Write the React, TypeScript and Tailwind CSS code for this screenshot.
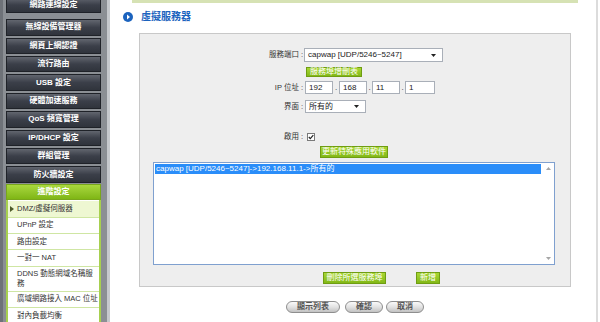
import React from "react";

const navItems = [
  "無線設備管理器",
  "網頁上網認證",
  "流行路由",
  "USB 設定",
  "硬體加速服務",
  "QoS 頻寬管理",
  "IP/DHCP 設定",
  "群組管理",
  "防火牆設定",
];

function NavButton({ label, className = "" }: { label: string; className?: string }) {
  return (
    <div
      className={
        "flex h-[16.4px] w-[95px] shrink-0 items-center justify-center border border-[#1f2228] bg-gradient-to-b from-[#62666f] via-[#3b3f49] to-[#30343c] text-[8px] font-bold leading-none text-white " +
        className
      }
    >
      {label}
    </div>
  );
}

function SubItem({ children, active = false, tall = false }: { children: React.ReactNode; active?: boolean; tall?: boolean }) {
  return (
    <div
      className={`relative flex shrink-0 items-center border-b border-[#cfe6a3] pl-[9px] text-[7.5px] leading-[10px] text-[#333] ${
        tall ? "h-[25px]" : "h-[16.3px]"
      } ${active ? "bg-[#eef7d2]" : "bg-white"}`}
    >
      {active && (
        <svg className="absolute left-[2px] top-[5px]" width="4" height="6" viewBox="0 0 4 6">
          <path d="M0 0 L4 3 L0 6 Z" fill="#4d5a2a" />
        </svg>
      )}
      <div>{children}</div>
    </div>
  );
}

function Sidebar() {
  return (
    <div className="flex h-full w-[110px] shrink-0 flex-col border-l-[3px] border-r-[3px] border-l-[#6e7278] border-r-[#c6c9cd] bg-[#8b8f94] pl-[3px]">
      <NavButton label="網路連線設定" className="mt-[-3px] h-[16px]" />
      <div className="mt-[6.3px] flex flex-col gap-[2px]">
        {navItems.map((n) => (
          <NavButton key={n} label={n} />
        ))}
      </div>
      <div className="mt-[1.6px] flex w-[95px] flex-col">
        <div className="flex h-[16px] items-center justify-center border border-[#79a61c] bg-gradient-to-b from-[#a9d83c] to-[#7fb614] text-[8px] font-bold leading-none text-white">
          進階設定
        </div>
        <div className="flex flex-col border-x-2 border-[#a7d04f] bg-white pt-[1px]">
          <SubItem active>DMZ/虛擬伺服器</SubItem>
          <SubItem>UPnP 設定</SubItem>
          <SubItem>路由設定</SubItem>
          <SubItem>一對一 NAT</SubItem>
          <SubItem tall>
            <div className="whitespace-nowrap">DDNS 動態網域名稱服</div>
            <div>務</div>
          </SubItem>
          <SubItem>
            <span className="whitespace-nowrap">廣域網路接入 MAC 位址</span>
          </SubItem>
          <SubItem>對內負載均衡</SubItem>
        </div>
      </div>
    </div>
  );
}

function Arrow({ up = false }: { up?: boolean }) {
  return (
    <svg width="5" height="3" viewBox="0 0 5 3">
      <path d={up ? "M0 3 L2.5 0 L5 3 Z" : "M0 0 L5 0 L2.5 3 Z"} fill="#222" />
    </svg>
  );
}

function GreenButton({ label, className = "" }: { label: string; className?: string }) {
  return (
    <div
      className={
        "flex items-center justify-center border border-[#6f9d12] bg-gradient-to-b from-[#a8d733] to-[#82b816] text-[8px] leading-none text-white " +
        className
      }
    >
      {label}
    </div>
  );
}

function Pill({ label, className = "" }: { label: string; className?: string }) {
  return (
    <div
      className={
        "flex h-[12px] items-center justify-center rounded-full border border-[#8e8e8e] bg-gradient-to-b from-[#fafafa] via-[#e2e2e2] to-[#c2c2c2] text-[8px] font-bold leading-none text-[#555] " +
        className
      }
    >
      {label}
    </div>
  );
}

function Box({ children, className = "" }: { children?: React.ReactNode; className?: string }) {
  return (
    <div className={"flex h-[13px] items-center border border-[#a9afb8] bg-white pl-[3px] text-[8px] leading-none text-[#222] " + className}>
      {children}
    </div>
  );
}

function Label({ text }: { text: string }) {
  return (
    <div className="w-[163px] shrink-0 text-right text-[7.5px] leading-none text-[#333]">
      {text}
      <span className="ml-[2px]">:</span>
    </div>
  );
}

export default function App() {
  return (
    <div className="flex h-[322px] w-[600px] overflow-hidden bg-white font-['Liberation_Sans','Noto_Sans_CJK_TC',sans-serif]">
      <Sidebar />
      <div className="flex w-[486px] shrink-0 flex-col">
        <div className="ml-[22px] h-[3px] w-[446px] bg-[#d6e2b4]" />
        <div className="flex h-[28px] items-center">
          <svg className="ml-[13px]" width="10" height="10" viewBox="0 0 10 10">
            <circle cx="5" cy="5" r="5" fill="#1b63be" />
            <path d="M4 2.6 L7 5 L4 7.4 Z" fill="#fff" />
          </svg>
          <span className="ml-[8px] text-[10px] font-bold leading-none text-[#1b63be]">虛擬服務器</span>
        </div>
        <div className="ml-[29px] mt-[2px] flex w-[432px] flex-col border border-[#c8c8c8] bg-[#eeeeee] pb-[2px]">
          <div className="mt-[14px] flex h-[14px] items-center">
            <Label text="服務端口" />
            <Box className="ml-[1px] h-[14px] w-[139px] justify-between pr-[6px]">
              <span>capwap [UDP/5246~5247]</span>
              <Arrow />
            </Box>
          </div>
          <div className="mt-[5px] flex h-[10px]">
            <GreenButton label="服務埠增刪表" className="ml-[166px] h-[10px] w-[56px]" />
          </div>
          <div className="mt-[4px] flex h-[13px] items-center text-[8px] text-[#333]">
            <Label text="IP 位址" />
            <Box className="ml-[2px] w-[28px]">192</Box>
            <span className="w-[6px] text-center">.</span>
            <Box className="w-[28px]">168</Box>
            <span className="w-[5px] text-center">.</span>
            <Box className="w-[28px]">11</Box>
            <span className="w-[5px] text-center">.</span>
            <Box className="w-[30px]">1</Box>
          </div>
          <div className="mt-[6px] flex h-[13px] items-center">
            <Label text="界面" />
            <Box className="ml-[2px] w-[61px] justify-between pr-[6px]">
              <span>所有的</span>
              <Arrow />
            </Box>
          </div>
          <div className="mt-[20px] flex h-[8px] items-center">
            <Label text="啟用" />
            <svg className="ml-[4px]" width="8" height="8" viewBox="0 0 8 8">
              <rect x="0.5" y="0.5" width="7" height="7" fill="#fff" stroke="#7a7a7a" />
              <path d="M1.8 4 L3.3 5.6 L6.3 2.2" fill="none" stroke="#222" strokeWidth="1.2" />
            </svg>
          </div>
          <div className="mt-[5px] flex h-[12px]">
            <GreenButton label="更新特殊應用軟件" className="ml-[180px] h-[12px] w-[68px]" />
          </div>
          <div className="ml-[13px] mt-[4px] flex h-[103px] w-[402px] border border-[#7fa0cf] bg-white">
            <div className="flex-1 p-[1px]">
              <div className="h-[10px] whitespace-nowrap bg-[#2a8df9] pl-[1px] text-[8px] leading-[10px] text-white">
                capwap [UDP/5246~5247]-&gt;192.168.11.1-&gt;所有的
              </div>
            </div>
            <div className="flex w-[12px] flex-col items-center justify-between py-[4px] opacity-40">
              <Arrow up />
              <Arrow />
            </div>
          </div>
          <div className="mt-[7px] flex h-[12px]">
            <GreenButton label="刪除所選服務埠" className="ml-[183px] h-[12px] w-[63px]" />
            <GreenButton label="新增" className="ml-[30px] h-[12px] w-[24px]" />
          </div>
        </div>
        <div className="mt-[14px] flex">
          <Pill label="顯示列表" className="ml-[176px] w-[54px]" />
          <Pill label="確認" className="ml-[5px] w-[38px]" />
          <Pill label="取消" className="ml-[3px] w-[38px]" />
        </div>
      </div>
      <div className="h-full w-[2px] shrink-0 bg-[#dcdcdc]" />
    </div>
  );
}
